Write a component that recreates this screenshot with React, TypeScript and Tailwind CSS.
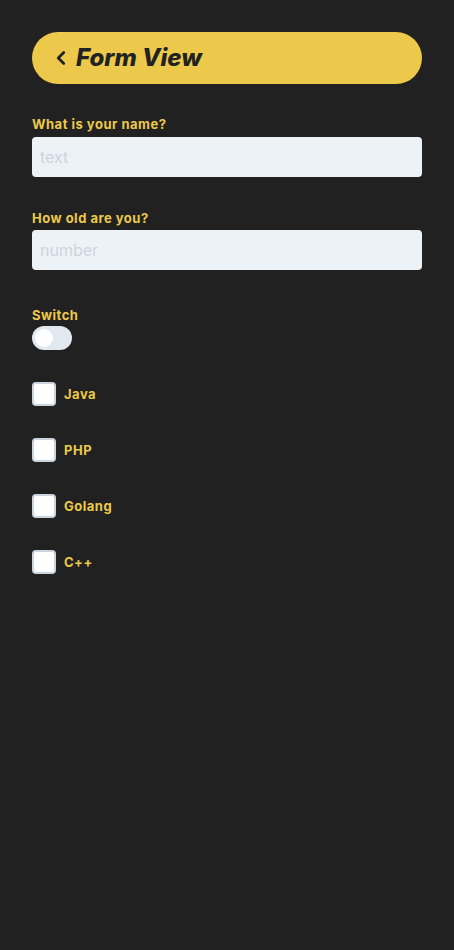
import { ChevronLeft } from "lucide-react";

const languages = ["Java", "PHP", "Golang", "C++"];

function FieldLabel({ children, className = "" }: { children: React.ReactNode; className?: string }) {
  return (
    <label className={`block text-[13px] font-bold leading-4 tracking-[0.5px] text-[#ecc94b] ${className}`}>
      {children}
    </label>
  );
}

export default function App() {
  return (
    <div className="min-h-[950px] bg-[#212121] px-8 pt-8 font-['Inter',sans-serif]">
      <header className="flex h-[52px] items-center gap-1 rounded-full bg-[#ecc94b] pl-[18px] text-[#222222]">
        <ChevronLeft size={22} strokeWidth={3} />
        <h1 className="text-2xl font-extrabold italic leading-none">Form View</h1>
      </header>

      <FieldLabel className="mt-8">What is your name?</FieldLabel>
      <input
        type="text"
        placeholder="text"
        className="mt-[5px] h-10 w-full rounded bg-[#edf2f7] px-2 text-base text-gray-800 outline-none placeholder:text-[#cbd5e0]"
      />

      <FieldLabel className="mt-[33px]">How old are you?</FieldLabel>
      <input
        type="number"
        placeholder="number"
        className="mt-[4px] h-10 w-full rounded bg-[#edf2f7] px-2 text-base text-gray-800 outline-none placeholder:text-[#cbd5e0]"
      />

      <FieldLabel className="mt-[37px]">Switch</FieldLabel>
      <div className="mt-[3px] flex h-6 w-10 items-center rounded-full bg-[#e2e8f0] px-[3px]">
        <span className="h-[18px] w-[18px] rounded-full bg-white" />
      </div>

      <div className="mt-8 flex flex-col gap-8">
        {languages.map((lang) => (
          <label key={lang} className="flex items-center gap-2">
            <span className="h-6 w-6 rounded border-2 border-[#cbd5e0] bg-white" />
            <span className="pt-[2px] text-[13px] font-bold tracking-[0.5px] text-[#ecc94b]">{lang}</span>
          </label>
        ))}
      </div>
    </div>
  );
}
